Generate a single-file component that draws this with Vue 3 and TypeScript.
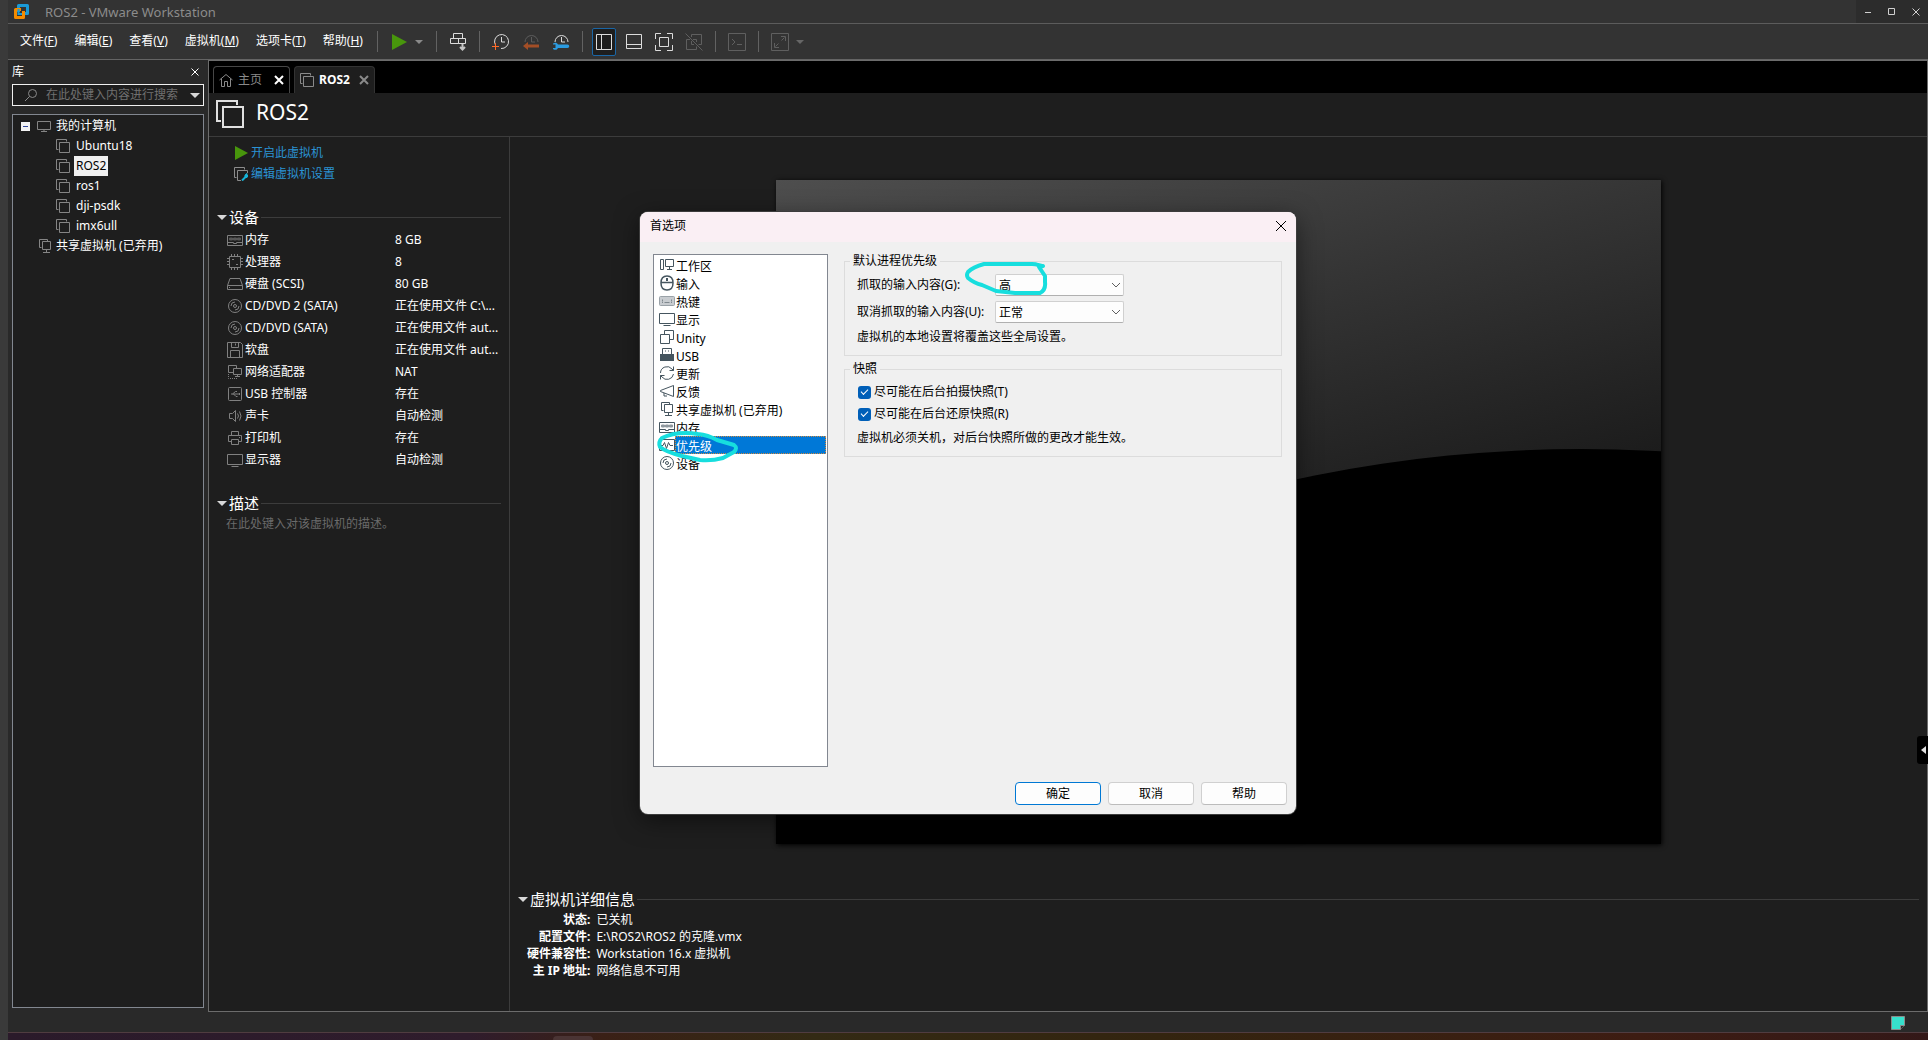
<script setup lang="ts">
import { ref } from 'vue'

interface Menu { label: string; key: string }
interface Device { icon: string; name: string; value: string }
interface Pref { icon: string; name: string }

const menus: Menu[] = [
  { label: '文件', key: 'F' },
  { label: '编辑', key: 'E' },
  { label: '查看', key: 'V' },
  { label: '虚拟机', key: 'M' },
  { label: '选项卡', key: 'T' },
  { label: '帮助', key: 'H' },
]

const machines: string[] = ['Ubuntu18', 'ROS2', 'ros1', 'dji-psdk', 'imx6ull']
const selectedMachine = ref('ROS2')

const devices: Device[] = [
  { icon: 'memory', name: '内存', value: '8 GB' },
  { icon: 'cpu', name: '处理器', value: '8' },
  { icon: 'disk', name: '硬盘 (SCSI)', value: '80 GB' },
  { icon: 'cd', name: 'CD/DVD 2 (SATA)', value: '正在使用文件 C:\\...' },
  { icon: 'cd', name: 'CD/DVD (SATA)', value: '正在使用文件 aut...' },
  { icon: 'floppy', name: '软盘', value: '正在使用文件 aut...' },
  { icon: 'network', name: '网络适配器', value: 'NAT' },
  { icon: 'usbctl', name: 'USB 控制器', value: '存在' },
  { icon: 'sound', name: '声卡', value: '自动检测' },
  { icon: 'printer', name: '打印机', value: '存在' },
  { icon: 'display', name: '显示器', value: '自动检测' },
]

const details: { name: string; value: string }[] = [
  { name: '状态:', value: '已关机' },
  { name: '配置文件:', value: 'E:\\ROS2\\ROS2 的克隆.vmx' },
  { name: '硬件兼容性:', value: 'Workstation 16.x 虚拟机' },
  { name: '主 IP 地址:', value: '网络信息不可用' },
]

const prefs: Pref[] = [
  { icon: 'workspace', name: '工作区' },
  { icon: 'mouse', name: '输入' },
  { icon: 'keyboard', name: '热键' },
  { icon: 'display', name: '显示' },
  { icon: 'unity', name: 'Unity' },
  { icon: 'usb', name: 'USB' },
  { icon: 'update', name: '更新' },
  { icon: 'feedback', name: '反馈' },
  { icon: 'shared', name: '共享虚拟机 (已弃用)' },
  { icon: 'memory', name: '内存' },
  { icon: 'pulse', name: '优先级' },
  { icon: 'cd', name: '设备' },
]
const selectedPref = ref('优先级')

const search = ref('')
const grabbed = ref('高')
const ungrabbed = ref('正常')
const bgSnapshot = ref(true)
const bgRestore = ref(true)
</script>

<template>
  <svg class="defs" aria-hidden="true">
    <symbol id="vm" viewBox="0 0 14 14"><path d="M2.5 10.5H.5V.5h10v2M3.5 3.5h10v10h-10z" /></symbol>
    <symbol id="memory" viewBox="0 0 16 16"><path d="M.5 3.5h15v10H.5zM.5 10.5h6v1h3v-1h6" /><path d="M2.5 6h3v2h-3zM6.5 6h3v2h-3zM10.5 6h3v2h-3z" fill="currentColor" opacity=".6" /></symbol>
    <symbol id="cpu" viewBox="0 0 16 16"><path d="M2.5 2.5h11v11h-11z" /><path d="M4.5 0v2M7.5 0v2M10.5 0v2M4.5 14v2M7.5 14v2M10.5 14v2M0 4.5h2M0 7.5h2M0 10.5h2M14 4.5h2M14 7.5h2M14 10.5h2M5 5.500h2M9 10.500h2" /></symbol>
    <symbol id="disk" viewBox="0 0 16 16"><path d="M.5 9.500L3 2.500h10l2.500 7v4H.500zM.500 9.500h15M2 11.500h1" /></symbol>
    <symbol id="cd" viewBox="0 0 16 16"><circle cx="8" cy="8" r="6.500" /><circle cx="8" cy="8" r="1.500" /><path d="M4 8a4 4 0 0 1 4-4M12 8a4 4 0 0 1-4 4" /></symbol>
    <symbol id="floppy" viewBox="0 0 16 16"><path d="M.5.5h13l2 2v13H.5zM4.500.500v5h7v-5M8.500 1.500v2M3.500 15.500v-7h9v7" /></symbol>
    <symbol id="network" viewBox="0 0 16 16"><path d="M6.500 8.500h-5v-7h8v3M6.500 4.500h8v6h-8zM10.500 10.500v2M8 12.500h5" /><path d="M1.500 10v4.500H10" stroke-dasharray="1 1" /></symbol>
    <symbol id="usbctl" viewBox="0 0 16 16"><rect x="1.500" y="1.500" width="13" height="13" rx="1" /><path d="M4 8h8M5.500 8l3-2.500H10M6.500 8L9 10.500h1.500M12 7l1 1-1 1" /></symbol>
    <symbol id="sound" viewBox="0 0 16 16"><path d="M2.500 5.500h3l3-3v11l-3-3h-3zM10.500 5.500q2 2.500 0 5M12.500 3.500q3 4.500 0 9" /></symbol>
    <symbol id="printer" viewBox="0 0 16 16"><path d="M4.500 5.500v-4h7v4M4.500 11.500h-3v-6h13v6h-3M4.500 9.500h7v5h-7zM12 7.500h1" /></symbol>
    <symbol id="display" viewBox="0 0 16 16"><path d="M.5 2.500h15v10H.5zM4.500 14.500h7" /></symbol>
    <symbol id="monitor" viewBox="0 0 14 14"><path d="M.5 2.500h13v8H.5zM7 10.500v2M4 12.500h6" /></symbol>
    <symbol id="shared" viewBox="0 0 16 16"><path d="M4.500 9.500h-2v-8h8v2M5.500 3.500h8v8h-8zM9.500 11.500v3M6 14.500h7" /></symbol>
    <symbol id="workspace" viewBox="0 0 16 16"><path d="M1.500 2.500h3v10h-3zM6.500 2.500h8v7h-8zM10.500 9.500v3M8 12.500h5" /></symbol>
    <symbol id="mouse" viewBox="0 0 16 16"><path d="M8 1C3.500 1 2 4 2 8s2 7 6 7 6-3 6-7-1.500-7-6-7zM2 7.500h12" stroke-width="1.500" /><path d="M8 3v3" stroke-width="2" /></symbol>
    <symbol id="keyboard" viewBox="0 0 16 16"><rect x=".5" y="3.500" width="15" height="9" rx="1" fill="#c8ccd0" stroke="#9aa2a8" /><path d="M3 9.500h1M5.500 9.500h5M12 9.500h1M3.500 6.500v2M12.500 6.500v2" stroke="#80898f" /></symbol>
    <symbol id="unity" viewBox="0 0 16 16"><path d="M1.500 5.500h9v9h-9zM5.500 5V1.500h9v9H11" /></symbol>
    <symbol id="usb" viewBox="0 0 16 16"><path d="M3.500 7V1.500h9V7M6.500 3.500v1M9.500 3.500v1" /><path d="M1 7h14v7H1z" fill="currentColor" stroke="none" /></symbol>
    <symbol id="update" viewBox="0 0 16 16"><path d="M1.500 8A6.500 6.500 0 0 1 13 4l1.500 1.500M14.500 1.500v4h-4M14.500 9A6.500 6.500 0 0 1 3 12l-1.500-1.500M1.500 14.500v-4h4" /></symbol>
    <symbol id="feedback" viewBox="0 0 16 16"><path d="M1.500 7.500l13-5v11l-13-5zM5 10v3h3" /></symbol>
    <symbol id="pulse" viewBox="0 0 16 16"><path d="M.5 2.500h15v11H.5z" fill="#fff" /><path d="M2 8.500h2l1.500-3 2 6 2-6 1.500 3h3" /></symbol>
  </svg>

  <div class="desktop">
    <div class="window">
      <header class="titlebar">
        <svg class="logo" viewBox="0 0 17 17" width="17" height="17">
          <path d="M5.500 9V2.500h9v8H12" fill="none" stroke="#1a9ad6" stroke-width="3" stroke-linejoin="round" />
          <path d="M8 6.500H2.500v8h8V8" fill="none" stroke="#f38b00" stroke-width="3" stroke-linejoin="round" />
          <path d="M5.500 6v5H9" fill="none" stroke="#1a9ad6" stroke-width="2" />
        </svg>
        <span class="title">ROS2 - VMware Workstation</span>
        <div class="wincontrols">
          <button aria-label="最小化"><svg viewBox="0 0 10 10"><path d="M2 5.500h6" /></svg></button>
          <button aria-label="最大化"><svg viewBox="0 0 10 10"><path d="M1.500 1.500h6v6h-6z" /></svg></button>
          <button aria-label="关闭"><svg viewBox="0 0 10 10"><path d="M1.500 1.500l7 7M8.500 1.500l-7 7" /></svg></button>
        </div>
      </header>

      <div class="toolbar">
        <nav class="menus">
          <button v-for="m in menus" :key="m.key">{{ m.label }}(<u>{{ m.key }}</u>)</button>
        </nav>
        <i class="sep"></i>
        <button class="tool" aria-label="启动"><svg viewBox="0 0 18 18"><path d="M2 1l15 8-15 8z" fill="#48960c" stroke="none" /></svg></button>
        <button class="caret" aria-label="电源选项"></button>
        <i class="sep"></i>
        <button class="tool" aria-label="发送 Ctrl+Alt+Del"><svg viewBox="0 0 18 18"><path d="M4.500.500h9v5h-9zM1.500 5.500h8v5h-8zM9.500 5.500h7v5h-7z" /><path d="M13.500 11v5M11 14l2.500 2.500L16 14" stroke-width="2" stroke="#c4c4c4" /></svg></button>
        <i class="sep"></i>
        <button class="tool" aria-label="拍摄快照"><svg viewBox="0 0 18 18"><path d="M3.500 12A7 7 0 1 1 9 15.500M9.500 4v5H13" /><path d="M3.500 10v7M0 13.500h7" stroke="#ff6a28" /></svg></button>
        <button class="tool" aria-label="恢复快照"><svg viewBox="0 0 18 18"><path d="M3 9a6.500 6.500 0 1 1 13 0M9.500 4v5H13" stroke="#5c5c5c" /><path d="M1 13l5-4v2.500h11v3H6V17z" fill="#a34e26" stroke="none" /></svg></button>
        <button class="tool" aria-label="管理快照"><svg viewBox="0 0 18 18"><path d="M3 9a6.500 6.500 0 1 1 13 0M9.500 4v5H13" /><path d="M1 10.500c2-1.500 4-1 5 1h9.500a1.500 1.500 0 0 1 0 3.500H6c-1 2-3 2.500-5 1v-1h2.500v-3.500H1z" fill="#2b9be0" stroke="none" /></svg></button>
        <i class="sep"></i>
        <button class="tool on" aria-label="显示库"><svg viewBox="0 0 18 18"><path d="M1.500 1.500h15v15h-15zM6.500 1.500v15" /></svg></button>
        <button class="tool" aria-label="显示缩略图"><svg viewBox="0 0 18 18"><path d="M1.500 1.500h15v14h-15zM1.500 11.500h15" /></svg></button>
        <button class="tool" aria-label="全屏"><svg viewBox="0 0 18 18"><path d="M.5 6V.5H6M12 .5h5.500V6M17.500 12v5.500H12M6 17.500H.5V12M4.500 4.500h9v9h-9z" /></svg></button>
        <button class="tool off" aria-label="Unity"><svg viewBox="0 0 18 18"><path d="M1.500 6.500v10h10v-3M6.500 1.500h10v10h-3M1.500 6.500H5M6.500 1.500V4M11.500 6.500V9M8 6.500h3.500M6.500 8v3.500H9M.5.500l17 17" /></svg></button>
        <i class="sep"></i>
        <button class="tool off" aria-label="控制台"><svg viewBox="0 0 18 18"><path d="M.5.500h17v17H.500zM4 6l3 3-3 3M9 11.500h5" /></svg></button>
        <i class="sep"></i>
        <button class="tool off" aria-label="拉伸"><svg viewBox="0 0 18 18"><path d="M.5.500h17v17H.500zM10 3.500h4.500V8M3.500 10v4.500H8M4.500 13.500l3-3M10.500 7.500l3-3" /></svg></button>
        <button class="caret dim" aria-label="拉伸选项"></button>
      </div>

      <div class="content">
        <aside class="sidebar">
          <div class="libhead">
            <span>库</span>
            <button aria-label="关闭库"><svg viewBox="0 0 10 10"><path d="M1.500 1.500l7 7M8.500 1.500l-7 7" /></svg></button>
          </div>
          <label class="search">
            <svg viewBox="0 0 14 14"><circle cx="8.500" cy="5.500" r="4" /><path d="M5.500 8.500L1 13" /></svg>
            <input v-model="search" type="text" placeholder="在此处键入内容进行搜索" aria-label="搜索库" />
            <i class="tri"></i>
          </label>
          <div class="tree">
            <div class="node root">
              <i class="minus"></i>
              <svg class="ic14"><use href="#monitor" /></svg>
              <span>我的计算机</span>
            </div>
            <button v-for="m in machines" :key="m" class="node child" @click="selectedMachine = m">
              <svg class="ic14"><use href="#vm" /></svg>
              <span :class="{ sel: m === selectedMachine }">{{ m }}</span>
            </button>
            <div class="node shared">
              <svg class="ic16"><use href="#shared" /></svg>
              <span>共享虚拟机 (已弃用)</span>
            </div>
          </div>
        </aside>

        <main class="main">
          <div class="tabs">
            <div class="tab">
              <svg class="ic14" viewBox="0 0 14 14"><path d="M.5 7L7 1.500 13.500 7M2.500 5.500v8h3v-5h3v5h3v-8" /></svg>
              <span>主页</span>
              <button class="x strong" aria-label="关闭主页"><svg viewBox="0 0 10 10"><path d="M1 1l8 8M9 1L1 9" /></svg></button>
            </div>
            <div class="tab active">
              <svg class="ic14"><use href="#vm" /></svg>
              <span>ROS2</span>
              <button class="x" aria-label="关闭 ROS2"><svg viewBox="0 0 10 10"><path d="M1 1l8 8M9 1L1 9" /></svg></button>
            </div>
          </div>

          <div class="vmhead">
            <svg class="ic28"><use href="#vm" /></svg>
            <h1>ROS2</h1>
          </div>

          <div class="vmbody">
            <section class="summary">
              <a class="action" href="#">
                <svg class="ic14" viewBox="0 0 14 14"><path d="M1 0l13 7-13 7z" fill="#48960c" stroke="none" /></svg>开启此虚拟机
              </a>
              <a class="action" href="#">
                <svg class="ic14" viewBox="0 0 14 14"><path d="M2.500 10.500H.5V.5h10v2M7 13.500H3.500v-10h10V6" /><path d="M8 13.500l4-4" stroke="#14b4d8" stroke-width="2" /><path d="M11 10.500V8l2-1.500v2h1l-1 2z" fill="#14b4d8" stroke="#14b4d8" /></svg>编辑虚拟机设置
              </a>

              <h2 class="group devgroup"><i class="tri"></i>设备</h2>
              <table class="devices">
                <tbody>
                  <tr v-for="d in devices" :key="d.name">
                    <th scope="row"><div><svg class="ic16"><use :href="'#' + d.icon" /></svg>{{ d.name }}</div></th>
                    <td>{{ d.value }}</td>
                  </tr>
                </tbody>
              </table>

              <h2 class="group descgroup"><i class="tri"></i>描述</h2>
              <p class="desc">在此处键入对该虚拟机的描述。</p>
            </section>

            <section class="preview">
              <svg class="screen" viewBox="0 0 885 664">
                <defs>
                  <linearGradient id="sheen" gradientUnits="userSpaceOnUse" x1="0" y1="0" x2="134" y2="480">
                    <stop offset="0" stop-color="#4e4e4e" />
                    <stop offset=".5" stop-color="#343434" />
                    <stop offset="1" stop-color="#1c1c1c" />
                  </linearGradient>
                </defs>
                <rect width="885" height="664" fill="url(#sheen)" />
                <circle cx="806" cy="1632" r="1363" fill="#000" />
              </svg>
              <div class="info">
                <h2 class="group"><i class="tri"></i>虚拟机详细信息</h2>
                <table>
                  <tbody>
                    <tr v-for="d in details" :key="d.name">
                      <th scope="row">{{ d.name }}</th>
                      <td>{{ d.value }}</td>
                    </tr>
                  </tbody>
                </table>
              </div>
              <button class="drawer" aria-label="展开面板"></button>
            </section>
          </div>
        </main>
      </div>

      <footer class="status">
        <svg viewBox="0 0 14 14"><path d="M.5.500h13v9l-4 4h-9z" fill="#36e0cc" stroke="#8a8a8a" /><path d="M9.500 13.500v-4h4" fill="#292929" stroke="#8a8a8a" /></svg>
      </footer>

      <div class="overlay">
        <div class="dialog" role="dialog" aria-label="首选项">
          <div class="dlghead">
            <span>首选项</span>
            <button aria-label="关闭"><svg viewBox="0 0 12 12"><path d="M1 1l10 10M11 1L1 11" /></svg></button>
          </div>
          <div class="dlgbody">
            <div class="prefs">
              <button v-for="p in prefs" :key="p.name" class="pref" :class="{ current: p.name === selectedPref }" @click="selectedPref = p.name">
                <svg class="ic16"><use :href="'#' + p.icon" /></svg><span>{{ p.name }}</span>
              </button>
            </div>
            <div class="panes">
              <fieldset class="priority">
                <legend>默认进程优先级</legend>
                <div class="field">
                  <label for="grab">抓取的输入内容(G):</label>
                  <span class="combo">
                    <select id="grab" v-model="grabbed"><option>高</option><option>正常</option></select>
                    <svg viewBox="0 0 10 6"><path d="M1 1l4 4 4-4" /></svg>
                  </span>
                </div>
                <div class="field">
                  <label for="ungrab">取消抓取的输入内容(U):</label>
                  <span class="combo">
                    <select id="ungrab" v-model="ungrabbed"><option>正常</option><option>低</option></select>
                    <svg viewBox="0 0 10 6"><path d="M1 1l4 4 4-4" /></svg>
                  </span>
                </div>
                <p>虚拟机的本地设置将覆盖这些全局设置。</p>
              </fieldset>
              <fieldset class="snapshot">
                <legend>快照</legend>
                <label class="check"><input v-model="bgSnapshot" type="checkbox" />尽可能在后台拍摄快照(T)</label>
                <label class="check"><input v-model="bgRestore" type="checkbox" />尽可能在后台还原快照(R)</label>
                <p>虚拟机必须关机，对后台快照所做的更改才能生效。</p>
              </fieldset>
            </div>
          </div>
          <div class="dlgfoot">
            <button class="primary">确定</button>
            <button>取消</button>
            <button>帮助</button>
          </div>
          <svg class="ink" viewBox="0 0 656 602" aria-hidden="true">
            <path d="M402 54L398 53Q396 52 392 52H344Q333 55 328 60Q326 63 328 66Q334 71 342 73L356 79L375 81H400Q406 78 405 70V64L399 55L403 54" />
            <path d="M22 226Q36 219 58 222Q68 223 77 228L94 233Q98 236 94 240L83 246Q72 249 60 248L42 244Q26 240 20 235Q18 230 22 226" />
          </svg>
        </div>
      </div>
    </div>
    <div class="taskbar"><i></i></div>
  </div>
</template>

<style>
html,
body {
  background: #3a3a3a;
}
</style>

<style scoped>
.desktop,
.desktop button,
.desktop input,
.desktop select {
  font: 12px/16px "Noto Sans", "Noto Sans CJK SC", sans-serif;
  color: #fff;
}
.desktop {
  display: flex;
  flex-direction: column;
  min-height: 100vh;
  padding-left: 8px;
  box-sizing: border-box;
  background: #3a3a3a;
}
.defs {
  position: absolute;
  width: 0;
  height: 0;
}
svg {
  display: block;
  flex: none;
  fill: none;
  stroke: currentColor;
}
button {
  border: 0;
  padding: 0;
  margin: 0;
  background: none;
  white-space: nowrap;
}
p,
h1,
h2 {
  margin: 0;
  font-weight: 400;
}
.ic14 { width: 14px; height: 14px; }
.ic16 { width: 16px; height: 16px; }
.ic28 { width: 28px; height: 28px; }

.window {
  position: relative;
  flex: 1;
  display: flex;
  flex-direction: column;
  background: #292929;
}
.titlebar {
  display: flex;
  align-items: center;
  height: 23px;
  padding-left: 5px;
  background: #333;
  border-bottom: 1px solid #5c5c5c;
}
.title {
  margin-left: 15px;
  font-size: 13px;
  color: #8c8c8c;
}
.wincontrols {
  display: flex;
  align-self: stretch;
  margin-left: auto;
  background: #2c2c2c;
}
.wincontrols button {
  width: 24px;
  display: flex;
  align-items: center;
  justify-content: center;
  color: #d0d0d0;
}
.wincontrols svg,
.x svg,
.libhead svg {
  width: 10px;
  height: 10px;
}

.toolbar {
  display: flex;
  align-items: center;
  height: 35px;
  padding-left: 12px;
  background: #333;
  border-bottom: 1px solid #646464;
}
.menus {
  display: flex;
  gap: 17px;
  margin-right: 5px;
  padding-bottom: 2px;
}
.sep {
  width: 1px;
  height: 21px;
  margin: 0 9px;
  background: #626262;
}
.tool {
  display: flex;
  align-items: center;
  justify-content: center;
  box-sizing: border-box;
  width: 24px;
  height: 28px;
}
.toolbar .tool { color: #dcdcdc; }
.toolbar .tool.off { color: #5f5f5f; }
.tool + .tool { margin-left: 6px; }
.tool svg {
  width: 18px;
  height: 18px;
}
.tool.on {
  background: #1e1e1e;
  border: 1px solid #1a66a6;
  border-radius: 2px;
}
.caret {
  width: 16px;
  height: 20px;
  display: flex;
  align-items: center;
  justify-content: center;
}
.caret::before {
  content: "";
  border: 4px solid transparent;
  border-top-color: #8a8a8a;
  border-bottom: 0;
}
.caret.dim::before { border-top-color: #666; }

.content {
  flex: 1;
  display: flex;
}
.sidebar {
  display: flex;
  flex-direction: column;
  width: 200px;
  box-sizing: border-box;
  padding: 4px;
}
.libhead {
  display: flex;
  align-items: center;
  justify-content: space-between;
  height: 16px;
  padding-right: 4px;
}
.search {
  display: flex;
  align-items: center;
  height: 20px;
  margin-top: 4px;
  padding: 0 3px 0 11px;
  border: 1px solid #f0f0f0;
  background: #1e1e1e;
  color: #8a8a8a;
}
.search svg {
  width: 14px;
  height: 14px;
}
.search input {
  flex: 1;
  min-width: 0;
  margin-left: 8px;
  padding: 0;
  border: 0;
  outline: 0;
  background: none;
}
.search input::placeholder { color: #707070; }
.tri {
  border: 5px solid transparent;
  border-top-color: #d8d8d8;
  border-bottom: 0;
}
.tree {
  flex: 1;
  display: flex;
  flex-direction: column;
  margin-top: 8px;
  padding: 1px 0;
  border: 1px solid #828790;
  background: #1e1e1e;
}
.node {
  display: flex;
  align-items: center;
  height: 20px;
}
.node svg { color: #858585; }
.root { padding-left: 8px; }
.root svg { margin: 0 5px 0 7px; }
.minus {
  display: flex;
  align-items: center;
  justify-content: center;
  width: 9px;
  height: 9px;
  background: #f4f4f4;
}
.minus::before {
  content: "";
  width: 5px;
  height: 1px;
  background: #33499c;
}
.child { padding-left: 43px; }
.child span {
  margin-left: 4px;
  padding: 2px;
}
.child .sel {
  background: #f0f0f0;
  color: #000;
}
.shared { padding-left: 24px; }
.shared span { margin-left: 3px; }

.main {
  flex: 1;
  min-width: 0;
  display: flex;
  flex-direction: column;
  border: 1px solid #6c6c6c;
  background: #1e1e1e;
}
.tabs {
  display: flex;
  gap: 4px;
  height: 27px;
  padding: 5px 0 0 4px;
  background: #000;
}
.tab {
  display: flex;
  align-items: center;
  box-sizing: border-box;
  height: 27px;
  padding: 0 5px;
  border: 1px solid #474747;
  border-bottom: 0;
  border-radius: 4px 4px 0 0;
  color: #8a8a8a;
}
.tab span { margin: 0 12px 0 5px; }
.tab.active { background: #1e1e1e; border-color: #333; }
.tab.active span {
  margin-right: 9px;
  font-weight: 700;
  color: #fff;
}
.tab .x { color: #8a8a8a; }
.tab .x svg { stroke-width: 2; }
.tab .strong { color: #fff; }
.vmhead {
  display: flex;
  align-items: center;
  height: 43px;
  padding: 0 7px;
  border-bottom: 1px solid #3c3c3c;
  color: #e0e0e0;
}
.vmhead svg { margin-bottom: 2px; }
.vmhead h1 {
  margin: 0 0 6px 12px;
  font-size: 21px;
  line-height: 28px;
  color: #fff;
}
.vmbody {
  flex: 1;
  display: flex;
}
.summary {
  width: 284px;
  padding: 5px 8px;
  border-right: 1px solid #3c3c3c;
}
.action {
  display: flex;
  align-items: center;
  gap: 3px;
  height: 21px;
  padding-left: 17px;
  color: #2b93d4;
  text-decoration: none;
}
.action svg { color: #8c8c8c; }
.group {
  display: flex;
  align-items: center;
  gap: 2px;
  height: 24px;
  font-size: 15px;
  line-height: 24px;
}
.group::after {
  content: "";
  flex: 1;
  height: 1px;
  background: #3c3c3c;
}
.devgroup { margin-top: 21px; }
.descgroup { margin-top: 20px; }
table { border-collapse: collapse; }
th {
  font-weight: 400;
  text-align: left;
}
th,
td {
  padding: 0;
  white-space: nowrap;
}
.devices th,
.devices td { height: 22px; }
.devices th { width: 178px; }
.devices th div {
  display: flex;
  align-items: center;
  gap: 2px;
  padding-left: 10px;
}
.devices svg { color: #808080; }
.desc {
  padding: 1px 0 0 9px;
  color: #6a6a6a;
}
.preview {
  position: relative;
  flex: 1;
  min-width: 0;
  display: flex;
  flex-direction: column;
}
.screen {
  width: 885px;
  max-width: 100%;
  margin: 43px auto 0;
  stroke: none;
  box-shadow: 1px 1px 5px #000;
}
.info {
  margin-top: auto;
  padding: 0 8px 32px;
}
.info th,
.info td { height: 17px; }
.info th {
  padding-left: 9px;
  text-align: right;
  font-weight: 700;
}
.info td { padding-left: 6px; }
.drawer {
  position: absolute;
  right: -1px;
  top: 599px;
  width: 11px;
  height: 28px;
  background: #000;
  border-radius: 3px 0 0 3px;
}
.drawer::before {
  content: "";
  display: block;
  width: 0;
  margin-left: 4px;
  border: 4px solid transparent;
  border-right: 5px solid #e0e0e0;
  border-left: 0;
}
.status {
  display: flex;
  align-items: center;
  justify-content: flex-end;
  height: 20px;
  padding: 1px 23px 0;
  box-sizing: border-box;
}
.status svg {
  width: 14px;
  height: 14px;
}
.taskbar {
  height: 7px;
  border-top: 1px solid #503c40;
  background: linear-gradient(90deg, #2a1a2a 0%, #2f1c2c 24%, #3a2016 31%, #332a14 42%, #33240f 60%, #3d1c12 85%, #331818 100%);
}
.taskbar i {
  display: block;
  width: 40px;
  height: 4px;
  margin: 3px 0 0 545px;
  border-radius: 4px 4px 0 0;
  background: #4a3434;
}

.overlay {
  position: absolute;
  inset: 0;
  display: flex;
  align-items: center;
  justify-content: center;
  padding-bottom: 6px;
}
.dialog {
  position: relative;
  display: flex;
  flex-direction: column;
  width: 656px;
  border-radius: 8px;
  overflow: hidden;
  background: #f0f0f0;
  box-shadow: 0 0 0 1px #3c3c3c, 0 6px 24px rgba(0, 0, 0, 0.5);
}
.dialog,
.dialog .pref,
.dialog select,
.dialog .dlgfoot button,
.dialog .dlghead button { color: #000; }
.dlghead {
  display: flex;
  align-items: center;
  justify-content: space-between;
  box-sizing: border-box;
  height: 30px;
  padding: 0 9px 2px 10px;
  background: #faeff4;
}
.dlghead svg {
  width: 12px;
  height: 12px;
}
.dlgbody {
  display: flex;
  gap: 16px;
  padding: 12px 14px 0 13px;
}
.prefs {
  box-sizing: border-box;
  width: 175px;
  height: 513px;
  padding: 1px;
  border: 1px solid #828790;
  background: #fff;
}
.pref {
  display: flex;
  align-items: center;
  width: 100%;
  height: 18px;
  padding-left: 4px;
}
.pref svg { color: #45555f; }
.pref span {
  flex: 1;
  height: 18px;
  line-height: 21px;
  padding-left: 1px;
  box-sizing: border-box;
  text-align: left;
}
.pref.current span {
  background: #0078d7;
  outline: 1px dotted #d08a40;
  outline-offset: -1px;
  color: #fff;
}
.panes {
  flex: 1;
  display: flex;
  flex-direction: column;
  gap: 6px;
}
fieldset {
  min-width: 0;
  margin: 0;
  padding: 0 12px 8px;
  border: 1px solid #dcdcdc;
}
legend {
  height: 14px;
  margin-left: -7px;
  padding: 0 3px;
  line-height: 14px;
}
.field {
  display: flex;
  align-items: center;
  height: 22px;
  margin: 5px 0;
}
.field + .field { margin-bottom: 0; }
.priority .field:first-of-type { margin-top: 6px; }
.field label { width: 138px; }
.combo {
  position: relative;
  width: 129px;
}
.combo select {
  appearance: none;
  display: block;
  box-sizing: border-box;
  width: 100%;
  height: 22px;
  padding: 2px 3px 0;
  border: 1px solid #d0d0d0;
  border-bottom-color: #b0b0b0;
  border-radius: 2px;
  background: #fdfdfd;
}
.combo svg {
  position: absolute;
  right: 3px;
  top: 8px;
  width: 10px;
  height: 6px;
  color: #606060;
  pointer-events: none;
}
.priority p { margin: 6px 0 2px; }
.snapshot p { margin: 5px 0 2px; }
.check {
  display: flex;
  align-items: center;
  gap: 3px;
  height: 22px;
}
.snapshot legend + .check { margin-top: 5px; }
.check input {
  appearance: none;
  display: flex;
  justify-content: center;
  width: 13px;
  height: 13px;
  margin: 0 0 0 1px;
  border-radius: 3px;
  background: #fff;
}
.check input:checked { background: #005fb8; }
.check input:checked::before {
  content: "";
  width: 6px;
  height: 3px;
  margin-top: 3px;
  border: 1px solid #fff;
  border-width: 0 0 1px 1px;
  transform: rotate(-45deg);
}
.dlgfoot {
  display: flex;
  justify-content: flex-end;
  gap: 7px;
  padding: 15px 9px 9px;
}
.dlgfoot button {
  box-sizing: border-box;
  width: 86px;
  height: 23px;
  padding-top: 1px;
  border: 1px solid #d0d0d0;
  border-bottom-color: #bcbcbc;
  border-radius: 4px;
  background: #fdfdfd;
}
.dlgfoot .primary { border-color: #0078d4; }
.ink {
  position: absolute;
  inset: 0;
  width: 656px;
  height: 602px;
  stroke: #17dede;
  stroke-width: 4;
  stroke-linejoin: round;
  stroke-linecap: round;
  pointer-events: none;
}
</style>
